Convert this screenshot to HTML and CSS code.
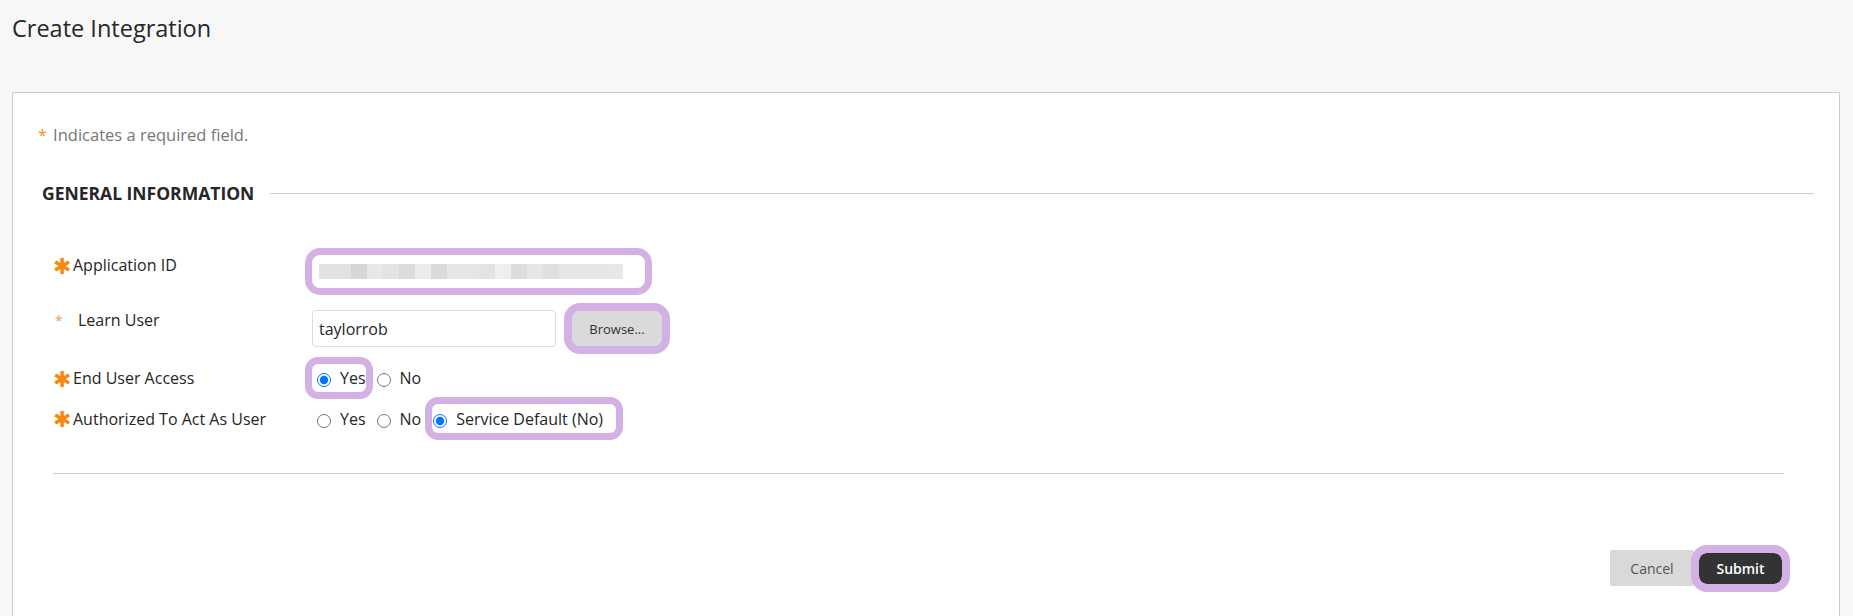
FILE: index.html
```html
<!DOCTYPE html>
<html>
<head>
    <title>Create Integration</title>
    <link rel="stylesheet" href="styles.css">
</head>
<body>
    <div class="page-header">
        <h1>Create Integration</h1>
    </div>

    <div class="panel">
        <p class="req-note"><span class="req-mark">*</span> Indicates a required field.</p>

        <div class="section-title">
            <h2>GENERAL INFORMATION</h2>
            <span class="section-line"></span>
        </div>

        <form class="fields">
            <div class="field-row row-input">
                <label class="field-label"><span class="req-star">&#10033;</span>Application ID</label>
                <div class="field-value">
                    <div class="text-box text-box-wide highlight"><span class="redacted"></span></div>
                </div>
            </div>

            <div class="field-row row-input row-last-input">
                <label class="field-label" for="learnUser"><span class="req-mark req-mark-small">*</span>Learn User</label>
                <div class="field-value">
                    <input type="text" id="learnUser" class="text-box" value="taylorrob">
                    <button type="button" class="btn btn-browse highlight">Browse...</button>
                </div>
            </div>

            <div class="field-row row-radio">
                <label class="field-label"><span class="req-star">&#10033;</span>End User Access</label>
                <div class="field-value options">
                    <label class="option highlight"><input type="radio" name="endUser" checked>Yes</label>
                    <label class="option"><input type="radio" name="endUser">No</label>
                </div>
            </div>

            <div class="field-row row-radio">
                <label class="field-label"><span class="req-star">&#10033;</span>Authorized To Act As User</label>
                <div class="field-value options">
                    <label class="option"><input type="radio" name="actAs">Yes</label>
                    <label class="option"><input type="radio" name="actAs">No</label>
                    <label class="option option-default highlight"><input type="radio" name="actAs" checked>Service Default (No)</label>
                </div>
            </div>
        </form>

        <hr class="divider">

        <div class="actions">
            <button type="button" class="btn btn-cancel">Cancel</button>
            <button type="submit" class="btn btn-submit highlight">Submit</button>
        </div>
    </div>
</body>
</html>
```

FILE: styles.css
```css
body {
    margin: 0;
    font-family: "Open Sans", "Liberation Sans", sans-serif;
    background-color: #f7f7f7;
    color: #262626;
    overflow: hidden;
}

.page-header {
    padding: 12px 12px 0 12px;
    height: 92px;
    box-sizing: border-box;
}

h1 {
    margin: 0;
    font-size: 23.5px;
    font-weight: 400;
    line-height: 32px;
    color: #262626;
}

.panel {
    margin: 0 13px 0 12px;
    padding: 30px 25px 60px 25px;
    background-color: #fff;
    border: 1px solid #cdcdcd;
    min-height: 560px;
}

.req-note {
    margin: 0;
    font-size: 16.5px;
    line-height: 24px;
    color: #767676;
}

.req-mark {
    color: #f7901e;
    font-size: 16px;
}

.req-note .req-mark {
    margin-right: 2px;
}

.req-mark-small {
    display: inline-block;
    width: 25px;
    padding-left: 2px;
    box-sizing: border-box;
    font-size: 14px;
    color: #f59a5a;
}

.section-title {
    display: flex;
    align-items: center;
    margin-top: 34px;
    padding-left: 4px;
}

h2 {
    margin: 0;
    font-size: 17.5px;
    font-weight: 700;
    line-height: 24px;
    color: #262626;
}

.section-line {
    flex: 1;
    height: 1px;
    margin-left: 16px;
    background-color: #cdcdcd;
}

.fields {
    margin-top: 48px;
    padding-left: 15px;
}

.field-row {
    display: flex;
}

.row-input {
    align-items: flex-start;
    margin-bottom: 20px;
}

.row-last-input {
    margin-bottom: 17px;
}

.row-radio {
    align-items: center;
    margin-bottom: 12px;
}

.field-label {
    width: 259px;
    flex-shrink: 0;
    font-size: 16px;
    line-height: 24px;
    color: #262626;
}

.req-star {
    display: inline-block;
    width: 15px;
    margin-right: 5px;
    color: #f7890f;
    font-family: "DejaVu Sans", sans-serif;
    font-size: 22px;
    line-height: 16px;
    text-align: center;
    vertical-align: middle;
}

.field-value {
    display: flex;
    align-items: center;
}

.row-input .field-value {
    margin-top: 2px;
}

.options {
    gap: 5px;
}

.text-box {
    width: 244px;
    height: 37px;
    box-sizing: border-box;
    padding: 0 6px;
    border: 1px solid #dcdcdc;
    border-radius: 4px;
    font-family: "Open Sans", "Liberation Sans", sans-serif;
    font-size: 16px;
    color: #262626;
    background-color: #fff;
}

.text-box-wide {
    width: 333px;
    height: 33px;
    display: flex;
    align-items: center;
}

.redacted {
    display: block;
    width: 304px;
    height: 15px;
    background: linear-gradient(to right,
        #e2e2e2 0, #e2e2e2 32px,
        #d6d6d6 32px, #d6d6d6 48px,
        #e8e8e8 48px, #e8e8e8 64px,
        #e4e3e1 64px, #e4e3e1 80px,
        #dadbdd 80px, #dadbdd 96px,
        #ececec 96px, #ececec 112px,
        #dadadc 112px, #dadadc 128px,
        #e6e6e6 128px, #e6e6e6 160px,
        #e3e3e3 160px, #e3e3e3 176px,
        #efefee 176px, #efefee 192px,
        #dbdcde 192px, #dbdcde 208px,
        #e6e6e6 208px, #e6e6e6 224px,
        #e0e0df 224px, #e0e0df 240px,
        #e6e6e6 240px, #e6e6e6 288px,
        #e8e8e8 288px, #e8e8e8 304px);
}

.highlight {
    outline: 7px solid #d3b1e4;
}

.text-box.highlight {
    border-color: #fff;
    border-radius: 8px;
}

.btn {
    font-family: "Open Sans", "Liberation Sans", sans-serif;
    font-size: 14px;
    border: none;
    cursor: pointer;
}

.btn-browse {
    margin-left: 16px;
    width: 90px;
    height: 35px;
    background-color: #dadada;
    color: #333;
    border-radius: 8px;
    font-size: 13px;
    outline-width: 8px;
}

.option {
    display: inline-flex;
    align-items: center;
    height: 28px;
    padding-left: 6px;
    font-size: 16px;
    color: #262626;
    border-radius: 6px;
}

.options .option:first-child {
    padding-left: 5px;
}

.option input {
    width: 14px;
    height: 14px;
    margin: 4px 9px 0 0;
}

.option-default {
    margin-left: 6px;
    padding: 0 13px 0 1px;
    height: 29px;
}

.divider {
    margin: 40px 30px 0 15px;
    border: none;
    border-top: 1px solid #cdcdcd;
}

.actions {
    display: flex;
    justify-content: flex-end;
    align-items: center;
    gap: 5px;
    margin: 76px 32px 0 0;
}

.btn-cancel {
    width: 84px;
    height: 36px;
    background-color: #d9d9d9;
    color: #555;
    border-radius: 2px;
}

.btn-submit {
    width: 83px;
    height: 31px;
    background-color: #333;
    color: #fff;
    font-weight: 600;
    border-radius: 8px;
    outline-width: 8px;
}
```
